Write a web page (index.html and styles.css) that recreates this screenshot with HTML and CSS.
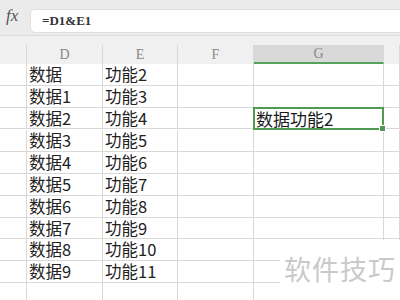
FILE: index.html
```html
<!DOCTYPE html>
<html lang="zh-CN">
<head>
    <meta charset="UTF-8">
    <title>公式 - 数据连接</title>
    <link rel="stylesheet" href="styles.css">
</head>
<body>

<div class="app">
    <div class="formula-bar">
        <span class="fx">fx</span>
        <div class="formula-input">=D1&amp;E1</div>
    </div>
    <div class="bar-gap"></div>

    <div class="sheet">
        <div class="hd corner"></div>
        <div class="hd">D</div>
        <div class="hd">E</div>
        <div class="hd">F</div>
        <div class="hd active">G</div>
        <div class="hd"></div>
    </div>
    <div class="sheet" id="rows"></div>

    <div class="watermark">软件技巧</div>
</div>

<script>
    const rowsDiv = document.getElementById('rows');
    const dataD = ['数据', '数据1', '数据2', '数据3', '数据4', '数据5', '数据6', '数据7', '数据8', '数据9', ''];
    const dataE = ['功能2', '功能3', '功能4', '功能5', '功能6', '功能7', '功能8', '功能9', '功能10', '功能11', ''];

    let html = '';
    for (let i = 0; i < dataD.length; i++) {
        // G4 holds the result of the formula
        const g = i === 2 ? '<div class="cell selected">数据功能2</div>' : '<div class="cell"></div>';
        html += `
            <div class="cell"></div>
            <div class="cell">${dataD[i]}</div>
            <div class="cell">${dataE[i]}</div>
            <div class="cell"></div>
            ${g}
            <div class="cell"></div>
        `;
    }
    rowsDiv.innerHTML = html;
</script>

</body>
</html>
```

FILE: styles.css
```css
body {
    margin: 0;
    background-color: #ffffff;
    font-family: "Noto Sans CJK SC", sans-serif;
}
.app {
    position: relative;
    width: 400px;
    height: 300px;
    overflow: hidden;
}
.formula-bar {
    display: flex;
    align-items: center;
    height: 35px;
    background-color: #ebebeb;
    border-bottom: 1px solid #dcdcdc;
}
.fx {
    width: 30px;
    padding-left: 6px;
    box-sizing: border-box;
    font-family: "Liberation Serif", serif;
    font-style: italic;
    font-size: 17px;
    color: #555;
    margin-top: -4px;
}
.formula-input {
    flex: 1;
    height: 24px;
    margin-top: 7px;
    margin-right: -10px;
    padding-left: 11px;
    background-color: #ffffff;
    border: 1px solid #e0e0e0;
    border-radius: 5px;
    box-sizing: border-box;
    font-family: "Liberation Serif", serif;
    font-weight: bold;
    font-size: 13px;
    line-height: 22px;
    color: #333;
}
.bar-gap {
    height: 9px;
    background-color: #f0f0f0;
}
.sheet {
    display: grid;
    grid-template-columns: 27px 76px 75px 76px 130px 1fr;
}
.hd {
    height: 19px;
    background-color: #f0f0f0;
    border-right: 1px solid #d8d8d8;
    box-sizing: border-box;
    text-align: center;
    font-family: "Liberation Serif", serif;
    font-size: 14px;
    line-height: 19px;
    color: #888;
}
.hd.active {
    background-color: #d9d9d9;
    border-bottom: 2px solid #59a25b;
    line-height: 18px;
}
.cell {
    height: 21.8px;
    border-right: 1px solid #d8d8d8;
    border-bottom: 1px solid #d8d8d8;
    box-sizing: border-box;
    padding-left: 2px;
    font-size: 16.5px;
    line-height: 21px;
    color: #222;
    white-space: nowrap;
}
.cell.selected {
    position: relative;
    margin: -1px 0 0 -1px;
    height: 23.8px;
    border: 2px solid #4f9a50;
    padding-left: 1px;
    font-size: 17px;
    line-height: 19px;
    color: #1a1a1a;
}
.cell.selected::after {
    content: "";
    position: absolute;
    right: -4px;
    bottom: -4px;
    width: 5px;
    height: 5px;
    background-color: #4f9a50;
    border: 1px solid #ffffff;
}
.watermark {
    position: absolute;
    left: 280px;
    top: 240px;
    width: 120px;
    height: 60px;
    padding-left: 4px;
    box-sizing: border-box;
    background-color: #ffffff;
    font-size: 27px;
    line-height: 58px;
    color: #c9c9c9;
    letter-spacing: 1px;
}
```
